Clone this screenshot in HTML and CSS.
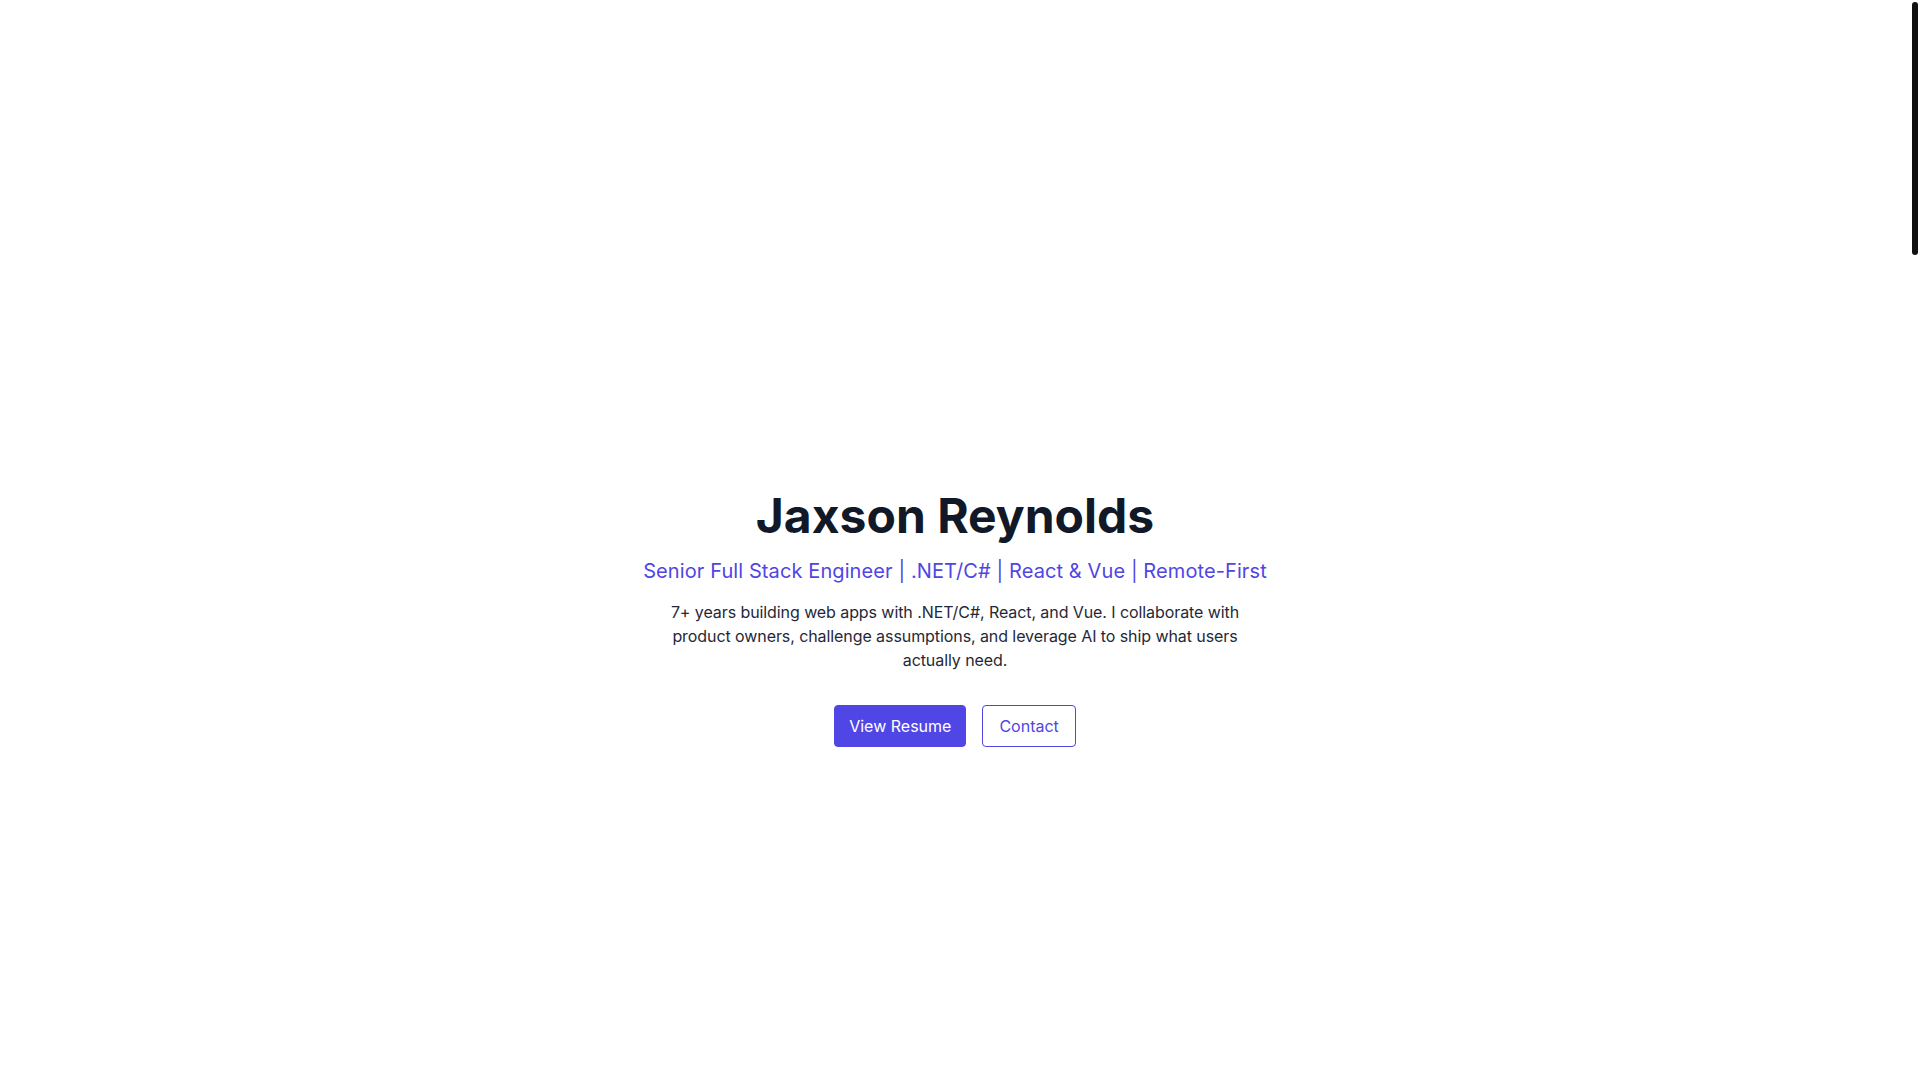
FILE: index.html
```html
<!DOCTYPE html>
<html lang="en">
<head>
<meta charset="utf-8">
<title>Jaxson Reynolds</title>
<link rel="stylesheet" href="styles.css">
</head>
<body>
<main class="page">
  <section class="hero">
    <h1 class="name">Jaxson Reynolds</h1>
    <p class="tagline">Senior Full Stack Engineer | .NET/C# | React &amp; Vue | Remote-First</p>
    <p class="intro">7+ years building web apps with .NET/C#, React, and Vue. I collaborate with product owners, challenge assumptions, and leverage AI to ship what users actually need.</p>
    <div class="actions">
      <a class="btn btn-primary" href="#resume">View Resume</a>
      <a class="btn btn-outline" href="#contact">Contact</a>
    </div>
  </section>
</main>
<div class="scroll-thumb" aria-hidden="true"></div>
</body>
</html>
```
FILE: styles.css
```css
body {
  margin: 0;
  font-family: Inter, "Noto Sans", sans-serif;
  color: #111827;
  background: #ffffff;
}
.page {
  box-sizing: border-box;
  padding-right: 10px;
  display: flex;
  flex-direction: column;
}
.scroll-thumb {
  position: fixed;
  top: 2px;
  right: 2px;
  width: 6px;
  height: 253px;
  background: #111111;
  border-radius: 3px;
}
.hero {
  height: 100vh;
  box-sizing: border-box;
  padding-top: 158px;
  display: flex;
  flex-direction: column;
  align-items: center;
  justify-content: center;
  text-align: center;
}
.name {
  margin: 0;
  font-size: 48px;
  line-height: 48px;
  font-weight: 700;
  color: #111827;
}
.tagline {
  margin: 17px 0 0;
  font-size: 20px;
  line-height: 28px;
  letter-spacing: 0.1px;
  color: #4f46e5;
}
.intro {
  margin: 15px 0 0;
  max-width: 576px;
  font-size: 16px;
  line-height: 24px;
  letter-spacing: -0.08px;
  color: #1f2937;
}
.actions {
  margin-top: 33px;
  display: flex;
  gap: 16px;
}
.btn {
  display: inline-block;
  padding: 8px 16px;
  font-size: 16px;
  line-height: 24px;
  font-weight: 400;
  border: 1px solid #4f46e5;
  border-radius: 4px;
  text-decoration: none;
}
.btn-primary {
  background: #4f46e5;
  color: #ffffff;
  padding: 8px 14px;
}
.btn-outline {
  background: #ffffff;
  color: #4f46e5;
}
```
